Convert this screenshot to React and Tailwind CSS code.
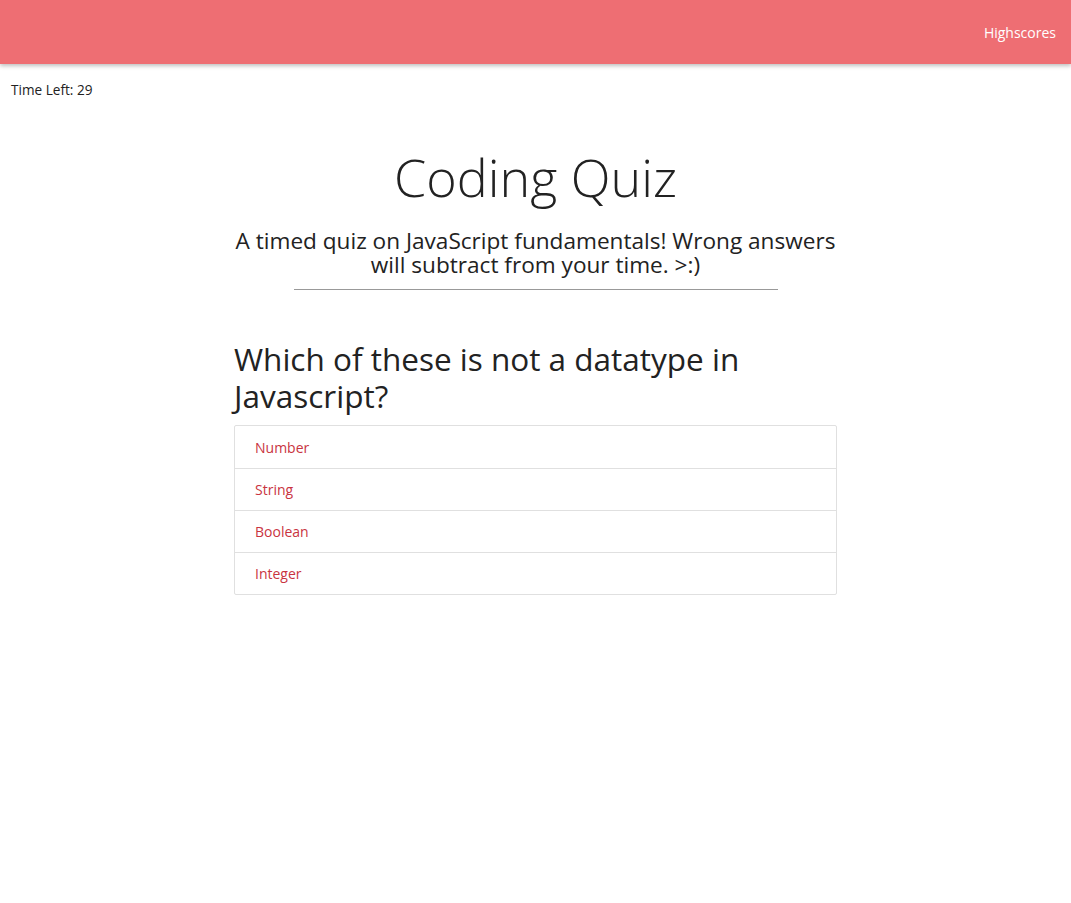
import React from 'react';

const answers = ['Number', 'String', 'Boolean', 'Integer'];

const App = () => {
  return (
    <div className="min-h-screen bg-white text-[#222] font-['Open_Sans',sans-serif]">
      <nav className="h-16 bg-[#ee6e73] shadow-[0_2px_4px_rgba(0,0,0,0.25)] flex items-center justify-end px-[15px]">
        <a href="#" className="text-white text-[14px]">Highscores</a>
      </nav>
      <div className="mt-4 pl-[11px] text-[13.6px] leading-5">Time Left: 29</div>
      <div className="w-[603px] mx-auto">
        <h1 className="mt-[45px] text-center text-[52px] leading-[64px] font-light">Coding Quiz</h1>
        <p className="mt-[20px] -mx-3 text-center text-[22.6px] leading-6">
          A timed quiz on JavaScript fundamentals! Wrong answers will subtract from your time. &gt;:)
        </p>
        <hr className="mt-3 mx-auto w-[484px] border-t border-[#999]" />
        <h2 className="mt-[50px] text-[31.5px] leading-[37px]">Which of these is not a datatype in Javascript?</h2>
        <ul className="mt-[11px] border border-[#e0e0e0] rounded-[2px]">
          {answers.map((a, i) => (
            <li
              key={a}
              className={`h-[42px] flex items-center px-5 text-[14px] text-[#c9343f] ${i > 0 ? 'border-t border-[#e0e0e0]' : ''}`}
            >
              {a}
            </li>
          ))}
        </ul>
      </div>
    </div>
  );
};

export default App;
